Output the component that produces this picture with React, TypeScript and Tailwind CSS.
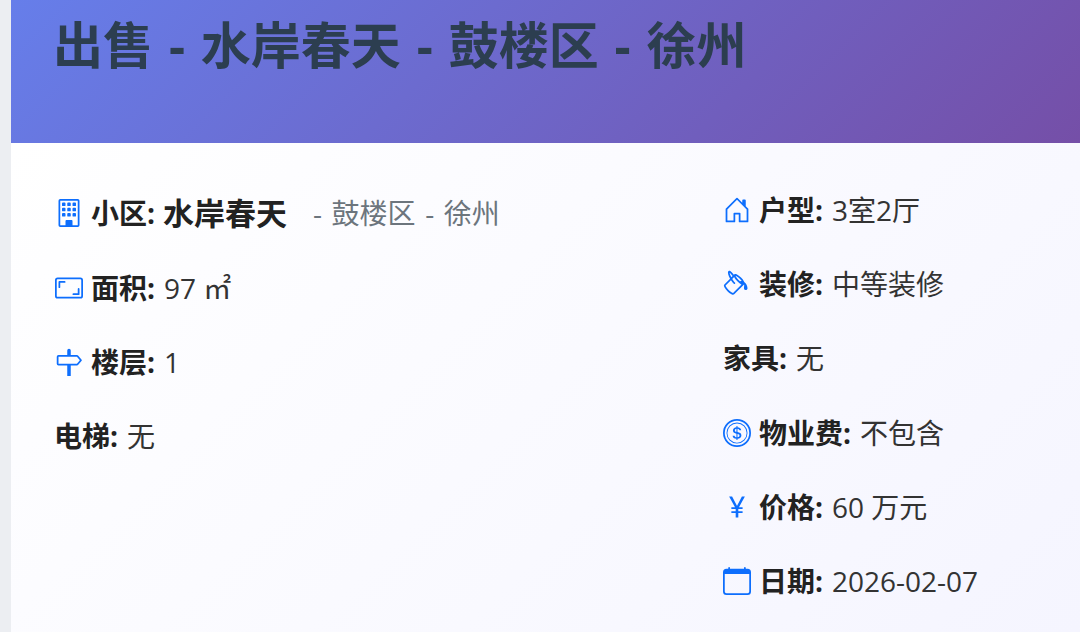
import type { ReactNode } from "react";
import {
  BsAspectRatio,
  BsBuilding,
  BsCalendar,
  BsCoin,
  BsCurrencyYen,
  BsHouseDoor,
  BsPaintBucket,
  BsSignpost,
} from "react-icons/bs";

const fontStack = {
  fontFamily: '"Open Sans", "Noto Sans CJK SC", sans-serif',
};

function Row({
  icon,
  label,
  value,
  className = "",
}: {
  icon?: ReactNode;
  label: string;
  value: string;
  className?: string;
}) {
  return (
    <div className={`flex items-center text-[28px] leading-none text-[#333] ${className}`}>
      {icon}
      <b className="font-bold text-[#222]">{label}:</b>
      <span className="ml-[9px]">{value}</span>
    </div>
  );
}

const iconClass = "mr-2 shrink-0 text-[#0d6efd]";

export default function App() {
  return (
    <div className="flex h-[632px] w-[1080px] overflow-hidden bg-white" style={fontStack}>
      <div className="w-[11px] shrink-0 bg-[#eceef2]" />
      <div className="flex min-w-0 flex-1 flex-col">
        <header className="h-[143px] shrink-0 bg-[linear-gradient(135deg,#667eea,#764ba2_108%)] pl-[42px] pt-[11px]">
          <h1 className="text-[50px] leading-[68px] font-bold whitespace-nowrap text-[#2c3e50] [word-spacing:2.9px]">
            出售 - 水岸春天 - 鼓楼区 - 徐州
          </h1>
        </header>
        <main className="flex flex-1 bg-[linear-gradient(135deg,#ffffff,#f5f5ff)] pl-[44px]">
          <div className="w-[668px] shrink-0 pt-[33px]">
            <div className="flex h-[74.4px] items-center text-[#222]">
              <BsBuilding size={28} className={iconClass} />
              <b className="text-[28px] font-bold">小区:</b>
              <b className="ml-2 text-[31px] font-bold">水岸春天</b>
              <span className="ml-[26px] text-[28px] text-[#6c757d] [word-spacing:2.3px]">- 鼓楼区 - 徐州</span>
            </div>
            <Row className="h-[74.4px]" icon={<BsAspectRatio size={28} className={iconClass} />} label="面积" value="97 ㎡" />
            <Row className="h-[74.4px]" icon={<BsSignpost size={28} className={iconClass} />} label="楼层" value="1" />
            <Row className="-ml-[1px] h-[74.4px]" label="电梯" value="无" />
          </div>
          <div className="flex-1 pt-[30px]">
            <Row className="h-[74.2px]" icon={<BsHouseDoor size={28} className={iconClass} />} label="户型" value="3室2厅" />
            <Row className="h-[74.2px]" icon={<BsPaintBucket size={28} className={iconClass} />} label="装修" value="中等装修" />
            <Row className="h-[74.2px]" label="家具" value="无" />
            <Row className="h-[74.2px]" icon={<BsCoin size={28} className={iconClass} />} label="物业费" value="不包含" />
            <Row className="h-[74.2px]" icon={<BsCurrencyYen size={28} className={iconClass} />} label="价格" value="60 万元" />
            <Row className="h-[74.2px]" icon={<BsCalendar size={28} className={iconClass} />} label="日期" value="2026-02-07" />
          </div>
        </main>
      </div>
    </div>
  );
}
